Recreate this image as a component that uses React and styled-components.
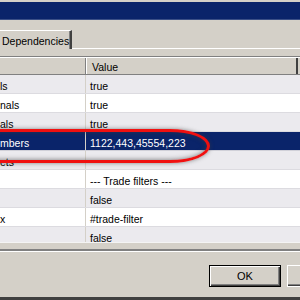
import styled, { createGlobalStyle } from 'styled-components';

const GlobalStyle = createGlobalStyle`
  html, body {
    margin: 0;
    padding: 0;
    overflow: hidden;
    background: #d4d0c8;
  }
  * {
    box-sizing: border-box;
  }
`;

const Frame = styled.div`
  position: relative;
  width: 300px;
  height: 300px;
  overflow: hidden;
  display: flex;
  flex-direction: column;
  background: #d4d0c8;
  font-family: "Liberation Sans", Arial, sans-serif;
  font-size: 10.5px;
  color: #000;
  border-top: 1px solid #d4d0c8;
  border-bottom: 3px solid #404040;
`;

const TopEdge = styled.div`
  height: 2px;
  background: #fff;
  border-bottom: 1px solid #d4d0c8;
  margin-top: -1px;
`;

const TitleBar = styled.div`
  height: 18px;
  background: #0a246a;
  border-bottom: 1px solid #3a4f86;
`;

const TabRow = styled.div`
  height: 29px;
  display: flex;
  align-items: flex-end;
  padding-top: 10px;
  border-bottom: 1px solid #fff;
`;

const Tab = styled.div`
  width: 72px;
  height: 19px;
  margin-bottom: -1px;
  padding: 2px 0 0 2px;
  display: flex;
  align-items: center;
  background: #d4d0c8;
  border-top: 1px solid #fff;
  border-right: 2px solid #404040;
  box-shadow: inset -1px 0 0 #808080;
`;

const Pane = styled.div`
  height: 202px;
  padding-top: 7px;
  padding-bottom: 6px;
  border-bottom: 2px solid #808080;
  box-shadow: 0 1px 0 #fff;
`;

const Grid = styled.div`
  height: 187px;
  overflow: hidden;
  background: #fff;
  border-top: 1px solid #808080;
  border-bottom: 1px solid #f4f4f4;
`;

const HeaderRow = styled.div`
  display: flex;
  height: 18px;
  background: #d4d0c8;
  border-top: 1px solid #fff;
  border-bottom: 1px solid #808080;
`;

const HeaderCell = styled.div`
  width: ${(p) => p.$w}px;
  display: flex;
  align-items: center;
  padding: 2px 0 0 6px;
  border-right: ${(p) => (p.$last ? '2px solid #404040' : '1px solid #808080')};
  box-shadow: ${(p) => (p.$first ? 'none' : 'inset 1px 0 0 #fff')};
`;

const Row = styled.div`
  display: flex;
  height: 19px;
  background: ${(p) => (p.$selected ? '#0a246a' : p.$alt ? '#ebeaee' : '#fff')};
  color: ${(p) => (p.$selected ? '#fff' : '#000')};
  border-bottom: 1px solid ${(p) => (p.$selected ? '#d0d0d8' : '#dcdbe0')};
`;

const NameCell = styled.div`
  width: 86px;
  display: flex;
  align-items: center;
  padding-top: 3px;
  white-space: nowrap;
  overflow: hidden;
  border-right: 1px solid #d4d0c8;
`;

const ValueCell = styled.div`
  flex: 1;
  display: flex;
  align-items: center;
  padding: 3px 0 0 4px;
  white-space: nowrap;
`;

const Footer = styled.div`
  flex: 1;
  display: flex;
  gap: 6px;
  padding: 14px 0 0 209px;
  overflow: hidden;
`;

const Button = styled.div`
  flex: 0 0 72px;
  height: 22px;
  display: flex;
  align-items: center;
  justify-content: center;
  background: #d4d0c8;
  border: 1px solid ${(p) => (p.$default ? '#000' : '#fff')};
  box-shadow: ${(p) =>
    p.$default
      ? 'inset 1px 1px 0 #fff, inset -1px -1px 0 #404040, inset -2px -2px 0 #808080'
      : 'inset -1px -1px 0 #404040, inset -2px -2px 0 #808080'};
  font-size: 11px;
`;

const Highlight = styled.div`
  position: absolute;
  left: -40px;
  top: 128px;
  width: 250px;
  height: 34px;
  border: 3px solid #f01010;
  border-radius: 40px / 17px;
  box-shadow: 0 0 4px rgba(60, 60, 60, 0.6), inset 0 0 5px rgba(60, 60, 60, 0.7);
  pointer-events: none;
`;

const rows = [
  { name: 'ls', value: 'true' },
  { name: 'nals', value: 'true' },
  { name: 'als', value: 'true' },
  { name: 'mbers', value: '1122,443,45554,223', selected: true },
  { name: 'ets', value: '' },
  { name: '', value: '--- Trade filters ---' },
  { name: '', value: 'false' },
  { name: 'x', value: '#trade-filter' },
  { name: '', value: 'false' },
];

export default function App() {
  return (
    <>
      <GlobalStyle />
      <Frame>
        <TopEdge />
        <TitleBar />
        <TabRow>
          <Tab>Dependencies</Tab>
        </TabRow>
        <Pane>
          <Grid>
            <HeaderRow>
              <HeaderCell $w={86} $first />
              <HeaderCell $w={212} $last>
                Value
              </HeaderCell>
            </HeaderRow>
            {rows.map((r, i) => (
              <Row key={i} $alt={i % 2 === 0} $selected={r.selected}>
                <NameCell>{r.name}</NameCell>
                <ValueCell>{r.value}</ValueCell>
              </Row>
            ))}
          </Grid>
        </Pane>
        <Footer>
          <Button $default>OK</Button>
          <Button />
        </Footer>
        <Highlight />
      </Frame>
    </>
  );
}
